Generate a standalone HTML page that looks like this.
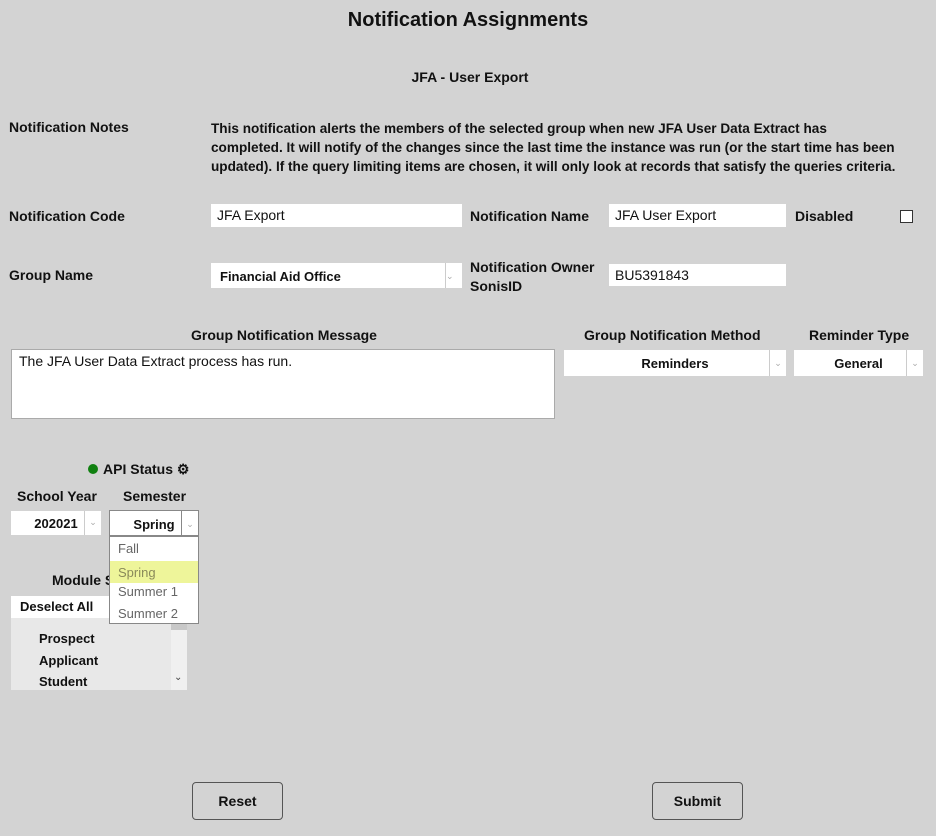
<!DOCTYPE html>
<html><head><style>
body{margin:0;width:936px;height:836px;background:#d3d3d3;font-family:"Liberation Sans",sans-serif;color:#111;position:relative;overflow:hidden}
.a{position:absolute}
.b{font-weight:bold;font-size:14px}
.in{position:absolute;background:#fff;font-size:14px;box-sizing:border-box;padding:3px 6px}
.sel{position:absolute;background:#fff;font-size:13px;font-weight:bold;text-align:center;box-sizing:border-box}
.sel .ar{position:absolute;right:0;top:0;bottom:0;width:16px;border-left:1px solid #ccc;color:#aaa;font-size:9px;line-height:26px;font-weight:normal}
.btn{position:absolute;background:#d3d3d3;border:1px solid #555;border-radius:4px;font-weight:bold;font-size:14px;text-align:center;line-height:36px;box-sizing:border-box}
</style></head><body>
<div class="a" style="left:0;width:936px;top:9px;text-align:center;font-size:20px;font-weight:bold">Notification Assignments</div>
<div class="a b" style="left:0;width:940px;top:69px;text-align:center">JFA - User Export</div>
<div class="a b" style="left:9px;top:119px">Notification Notes</div>
<div class="a b" style="left:211px;top:119px;width:725px;line-height:19px;font-size:13.6px;white-space:nowrap">This notification alerts the members of the selected group when new JFA User Data Extract has<br>completed. It will notify of the changes since the last time the instance was run (or the start time has been<br>updated). If the query limiting items are chosen, it will only look at records that satisfy the queries criteria.</div>
<div class="a b" style="left:9px;top:208px">Notification Code</div>
<div class="in" style="left:211px;top:204px;width:251px;height:23px">JFA Export</div>
<div class="a b" style="left:470px;top:208px">Notification Name</div>
<div class="in" style="left:609px;top:204px;width:177px;height:23px">JFA User Export</div>
<div class="a b" style="left:795px;top:208px">Disabled</div>
<div class="a" style="left:900px;top:210px;width:11px;height:11px;border:1px solid #333;background:#fff"></div>
<div class="a b" style="left:9px;top:267px">Group Name</div>
<div class="sel" style="left:211px;top:263px;width:251px;height:25px;text-align:left;padding:6px 9px">Financial Aid Office<div class="ar">&#8964;</div></div>
<div class="a b" style="left:470px;top:258px;line-height:19px">Notification Owner<br>SonisID</div>
<div class="in" style="left:609px;top:264px;width:177px;height:22px">BU5391843</div>
<div class="a b" style="left:0;width:568px;top:327px;text-align:center">Group Notification Message</div>
<div class="a b" style="left:584px;top:327px">Group Notification Method</div>
<div class="a b" style="left:809px;top:327px">Reminder Type</div>
<div class="in" style="left:11px;top:349px;width:544px;height:70px;border:1px solid #aaa;padding:3px 7px">The JFA User Data Extract process has run.</div>
<div class="sel" style="left:564px;top:350px;width:222px;height:26px;line-height:28px">Reminders<div class="ar">&#8964;</div></div>
<div class="sel" style="left:794px;top:350px;width:129px;height:26px;line-height:28px">General<div class="ar">&#8964;</div></div>
<div class="a" style="left:88px;top:464px;width:10px;height:10px;border-radius:50%;background:#108010"></div>
<div class="a b" style="left:103px;top:461px">API Status &#9881;</div>
<div class="a b" style="left:17px;top:488px">School Year</div>
<div class="a b" style="left:123px;top:488px">Semester</div>
<div class="sel" style="left:11px;top:511px;width:90px;height:24px;line-height:26px">202021<div class="ar" style="line-height:22px">&#8964;</div></div>
<div class="sel" style="left:109px;top:510px;width:90px;height:26px;line-height:28px;border:1px solid #888">Spring<div class="ar" style="border-left:1px solid #888">&#8964;</div></div>
<div class="a b" style="left:52px;top:572px">Module S</div>
<div class="a" style="left:11px;top:596px;width:176px;height:94px;background:#e8e8e8"></div>
<div class="a b" style="left:11px;top:596px;width:160px;height:22px;background:#fff;font-size:13px;line-height:22px;padding-left:9px;box-sizing:border-box">Deselect All</div>
<div class="a" style="left:171px;top:618px;width:16px;height:72px;background:#f0f0f0"></div>
<div class="a" style="left:171px;top:618px;width:16px;height:12px;background:#c8c8c8"></div>
<div class="a" style="left:174px;top:672px;font-size:10px;color:#444">&#8964;</div>
<div class="a b" style="left:39px;top:628px;font-size:13px;line-height:21.5px">Prospect<br>Applicant<br>Student</div>
<div class="a" style="left:109px;top:536px;width:88px;height:86px;background:#fff;border:1px solid #888;font-size:13px;color:#666">
<div style="position:absolute;left:8px;top:4px">Fall</div>
<div style="position:absolute;left:0;top:24px;width:88px;height:22px;background:#eef59a;color:#8a8a5a;padding-left:8px;box-sizing:border-box;line-height:24px">Spring</div>
<div style="position:absolute;left:8px;top:47px">Summer 1</div>
<div style="position:absolute;left:8px;top:69px">Summer 2</div>
</div>
<div class="btn" style="left:192px;top:782px;width:91px;height:38px">Reset</div>
<div class="btn" style="left:652px;top:782px;width:91px;height:38px">Submit</div>
</body></html>
